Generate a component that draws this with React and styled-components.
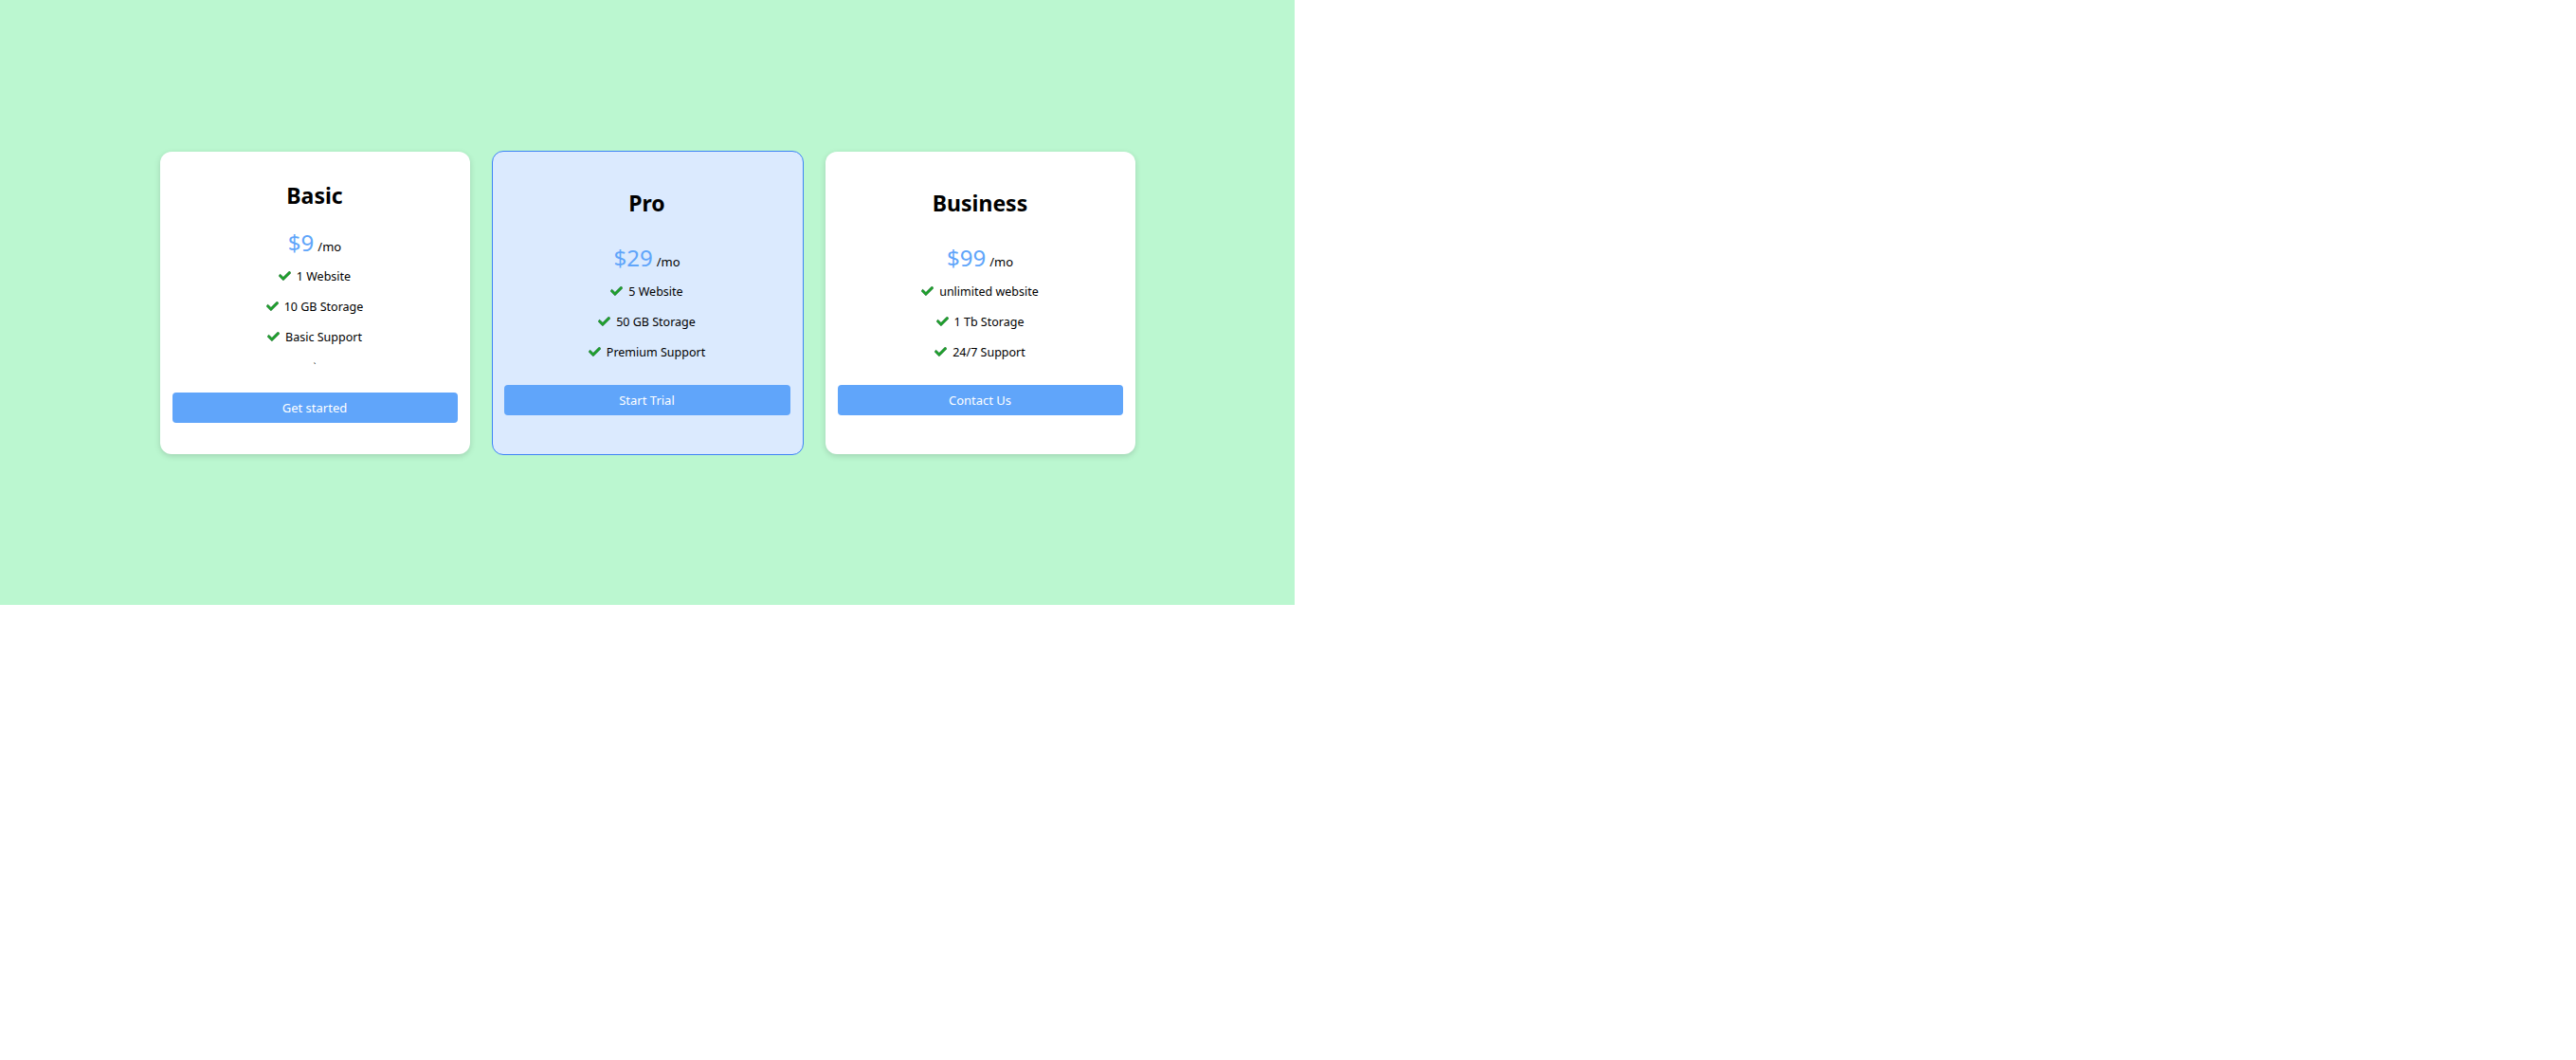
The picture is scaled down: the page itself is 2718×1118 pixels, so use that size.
import styled, { createGlobalStyle, css } from "styled-components";

const GlobalStyle = createGlobalStyle`
    body {
        margin: 0;
        font-family: "Noto Sans", "Open Sans", sans-serif;
        color: #000000;
    }
`

const plans = [
    {
        name: "Basic",
        price: "$9",
        features: ["1 Website", "10 GB Storage", "Basic Support"],
        stray: true,
        action: "Get started",
    },
    {
        name: "Pro",
        price: "$29",
        features: ["5 Website", "50 GB Storage", "Premium Support"],
        featured: true,
        action: "Start Trial",
    },
    {
        name: "Business",
        price: "$99",
        features: ["unlimited website", "1 Tb Storage", "24/7 Support"],
        action: "Contact Us",
    },
];

const Page = styled.div`
    display: flex;
    justify-content: center;
    align-items: center;
    gap: 23px;
    width: 1366px;
    height: 638px;
    background-color: #bbf7d0;
`

const Card = styled.div`
    display: flex;
    flex-direction: column;
    justify-content: space-evenly;
    width: 301px;
    height: 289px;
    padding: 15px 13px;
    border-radius: 12px;
    background-color: #ffffff;
    box-shadow: 0 2px 6px rgba(0, 0, 0, 0.15);
    text-align: center;

    ${(p) => p.$featured && css`
        width: 302px;
        padding: 15px 13px 15px 12px;
        background-color: #dbeafe;
        border: 1px solid #3b82f6;
        box-shadow: none;
    `}
`

const Title = styled.h2`
    margin: 0;
    font-size: 23px;
    line-height: 29px;
    font-weight: 700;
`

const Price = styled.p`
    margin: 0;
    padding-top: 3px;
    line-height: 29px;
`

const Amount = styled.span`
    font-size: 24px;
    color: #60a5fa;
`

const Per = styled.span`
    margin-left: 4px;
    font-size: 13px;
`

const Features = styled.ul`
    display: flex;
    flex-direction: column;
    gap: 12px;
    margin: 6px 0 0;
    padding: 0;
    list-style: none;
`

const Feature = styled.li`
    display: flex;
    justify-content: center;
    align-items: center;
    gap: 6px;
    height: 20px;
    font-size: 12.5px;
`

const Stray = styled.li`
    height: 20px;
    font-size: 9px;
    line-height: 20px;
`

const Button = styled.button`
    height: 32px;
    width: 100%;
    border: none;
    border-radius: 4px;
    background-color: #60a5fa;
    color: #ffffff;
    font-family: inherit;
    font-size: 13px;
`

function Check()
{
    return (
        <svg width="13" height="10" viewBox="0 60 512 400">
            <path
                d="M173.9 439.4l-166.4-166.4c-10-10-10-26.2 0-36.2l36.2-36.2c10-10 26.2-10 36.2 0L192 312.7 432.1 72.6c10-10 26.2-10 36.2 0l36.2 36.2c10 10 10 26.2 0 36.2l-294.4 294.4c-10 10-26.2 10-36.2 0z"
                fill="#1fa32c"
                stroke="#14532d"
                strokeWidth="18"
            />
        </svg>
    );
}

function Plan({ plan })
{
    return (
        <Card $featured={plan.featured}>
            <Title>{plan.name}</Title>
            <div>
                <Price>
                    <Amount>{plan.price}</Amount>
                    <Per>/mo</Per>
                </Price>
                <Features>
                    {plan.features.map((f) => (
                        <Feature key={f}>
                            <Check />
                            {f}
                        </Feature>
                    ))}
                    {plan.stray && <Stray>`</Stray>}
                </Features>
            </div>
            <Button>{plan.action}</Button>
        </Card>
    );
}

export default function App()
{
    return (
        <>
            <GlobalStyle />
            <Page>
                {plans.map((p) => (
                    <Plan key={p.name} plan={p} />
                ))}
            </Page>
        </>
    );
}
